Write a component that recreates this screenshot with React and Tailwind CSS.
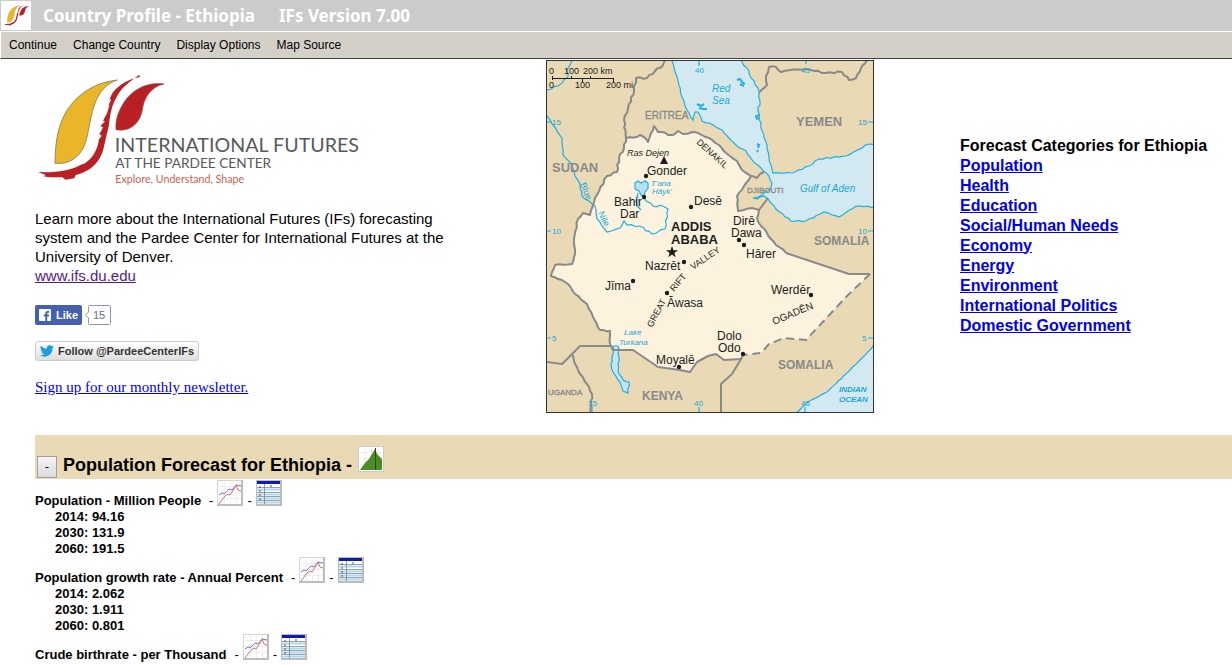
import React from "react";

const MENU = ["Continue", "Change Country", "Display Options", "Map Source"];

const CATEGORIES = [
  "Population",
  "Health",
  "Education",
  "Social/Human Needs",
  "Economy",
  "Energy",
  "Environment",
  "International Politics",
  "Domestic Government",
];

const INDICATORS = [
  { name: "Population - Million People", values: [["2014", "94.16"], ["2030", "131.9"], ["2060", "191.5"]] },
  { name: "Population growth rate - Annual Percent", values: [["2014", "2.062"], ["2030", "1.911"], ["2060", "0.801"]] },
  { name: "Crude birthrate - per Thousand", values: [] },
];

// Breaks straight segments into short, slightly irregular ones, like surveyed borders.
function rough(points, amount = 0.8, step = 4) {
  const out = [points[0]];
  let n = 0;
  for (let i = 1; i < points.length; i++) {
    const [x0, y0] = points[i - 1];
    const [x1, y1] = points[i];
    const len = Math.hypot(x1 - x0, y1 - y0) || 1;
    const parts = Math.max(1, Math.round(len / step));
    for (let k = 1; k < parts; k++) {
      n++;
      const o = Math.sin(n * 2.7 + i) * amount;
      out.push([x0 + ((x1 - x0) * k) / parts - ((y1 - y0) / len) * o, y0 + ((y1 - y0) * k) / parts + ((x1 - x0) / len) * o]);
    }
    out.push([x1, y1]);
  }
  return out.map(([x, y]) => x.toFixed(1) + "," + y.toFixed(1)).join(" ");
}

const NORTH = [[626,138],[637,137],[640,135],[644,137],[648,142],[654,126],[658,132],[662,132],[668,135],[673,135],[678,131],[683,134],[692,132],[700,134],[709,138],[719,145],[726,153],[737,161],[742,170],[751,176]];
const DJIBOUTI = [[751,176],[744,186],[737,196],[738,211],[752,208],[759,210]];
const EAST = [[759,210],[757,218],[761,226],[767,233],[771,239],[776,245],[779,247],[786,253]];
const OGADEN = [[786,253],[849,274],[870,274]];
const DASHED = [[870,274],[847,296],[806,340],[784,338],[769,344],[761,353],[743,355]];
const SOUTH = [[743,355],[741,359],[724,360],[716,354],[708,356],[697,362],[690,372],[680,370],[658,367],[633,350],[613,350],[610,344]];
const WEST = [[610,344],[610,331],[600,330],[593,317],[587,304],[575,294],[568,284],[562,280],[551,276],[555,265],[572,264],[575,254],[574,239],[578,219],[583,213],[590,215],[595,198],[607,176],[617,172],[619,158],[624,148],[626,138]];
const RED_SEA_WEST = [[672,61],[678,81],[682,97],[687,110],[693,120],[695,112],[698,112],[702,121],[709,123],[716,127],[722,130],[729,138],[737,146],[746,151],[752,160],[761,168],[769,176],[772,183],[769,190],[758,197],[754,198],[757,199],[764,196],[768,199],[776,209],[791,221],[806,221],[824,212],[839,217],[856,206],[875,207]];
const YEMEN_COAST = [[875,144],[869,144],[846,156],[819,159],[809,166],[792,173],[773,173],[769,158],[767,145],[762,131],[758,111],[760,101],[758,88],[751,78],[749,71],[739,59]];
const OCEAN = [[875,342],[871,349],[850,370],[827,392],[808,402],[796,413]];
const BLUE_NILE = [[547,116],[553,125],[562,138],[563,155],[572,165],[575,176],[580,184],[582,196],[595,206],[597,219],[607,232],[620,228],[624,221],[627,225],[640,226],[652,234],[665,229],[668,209],[663,206],[653,206],[644,198]];
const BORDERS = [
  [[665,60],[663,65],[655,71],[647,78],[636,78],[634,91],[628,108],[624,120],[626,138]],
  [[759,93],[767,85],[766,76],[769,67],[776,67],[781,72],[790,70],[806,69],[826,73],[842,72],[849,80],[856,78],[861,68],[867,60]],
  [[751,176],[757,178],[760,174],[764,172]],
  [[572,354],[575,364],[580,374],[587,384],[592,394],[590,413]],
];
const DOTS = [[646,176],[644,197],[691,207],[739,240],[744,245],[684,262],[633,281],[667,293],[811,295],[743,354],[679,367]];

function EthiopiaMap() {
  const land = [...NORTH, ...DJIBOUTI, ...EAST, ...OGADEN, ...DASHED, ...SOUTH, ...WEST];
  return (
    <svg viewBox="546 60 328 353" className="h-[353px] w-[328px] shrink-0" role="img" aria-label="Map of Ethiopia" fontFamily="'Liberation Sans', Arial, sans-serif">
      <rect x="546" y="60" width="328" height="353" fill="#e9d9b4" />
      <polygon points={rough([...RED_SEA_WEST, ...YEMEN_COAST], 0.5)} fill="#d2e9f1" />
      <polygon points={rough([...OCEAN, [875, 413]], 0.3)} fill="#d2e9f1" />
      <polygon points={land.join(" ")} fill="#fcf2de" />
      <g fill="none" stroke="#1fb0e4" strokeWidth="1.2">
        <polyline points={rough(RED_SEA_WEST, 0.6)} />
        <polyline points={rough(YEMEN_COAST, 0.7)} />
        <polyline points={rough(OCEAN, 0.3)} />
        <polyline points={rough(BLUE_NILE, 0.8)} />
        <polyline points={rough([[572,60],[567,71],[568,77],[558,86],[547,90]], 0.8)} />
        <path d="M699 61v5M806 61v3M546 122h6M546 231h5M546 338h5M868 122h6M868 231h6M868 338h6M592 406v6M699 407v5M805 407v5" />
        <path d="M635 183l3-2 3 2 4-2 3 2 0 5-3 4-1 5-3-2-2-4-4-2zM638 193l-2 8 1 5 4 4" fill="#b9e0ef" />
        <polygon points={rough([[613,346],[618,346],[619,357],[618,371],[623,380],[629,382],[628,393],[623,391],[620,382],[613,372],[611,364],[613,354],[613,346]], 0.6)} fill="#c5e6f1" />
        <path d="M737 80l3-1 2 3 3 2M740 84l4 2M697 104l4 2 3-2M699 108l4 1 4 0M755 117l4-2M756 119l3-1M757 144l2 1-1 3M757 150l1 2" strokeWidth="2" />
      </g>
      <g fill="none" stroke="#88898b" strokeWidth="2" strokeLinejoin="round">
        {[NORTH, DJIBOUTI, EAST, WEST, ...BORDERS].map((line, i) => (
          <polyline key={i} points={rough(line)} />
        ))}
        <polyline points={OGADEN.join(" ")} />
        <polyline points={SOUTH.join(" ")} />
        <polyline points={DASHED.join(" ")} strokeDasharray="8 5" />
        <path d="M759 210l9-12M610 346H580L562 364 547 362M741 359l-9 15-11 10v29" />
      </g>
      <path d="M552.5 76v4M552 78.5h61M571.5 76v3M582.500 79v3M590.500 76v3M613.500 78v4" stroke="#222" fill="none" />
      <g fontSize="9" fill="#222">
        <text x="549" y="74">0</text><text x="564" y="74">100</text><text x="583" y="74">200 km</text>
        <text x="549" y="88">0</text><text x="575" y="88">100</text><text x="606" y="88">200 mi</text>
      </g>
      <g fontWeight="bold" fill="#88898b">
        <text x="552" y="172" fontSize="13">SUDAN</text>
        <text x="645" y="119" fontSize="10" fontWeight="normal" stroke="#88898b" strokeWidth=".3">ERITREA</text>
        <text x="796" y="126" fontSize="13">YEMEN</text>
        <text x="814" y="245" fontSize="12">SOMALIA</text>
        <text x="778" y="369" fontSize="12">SOMALIA</text>
        <text x="642" y="400" fontSize="12">KENYA</text>
        <text x="548" y="395" fontSize="8" fontWeight="normal" stroke="#88898b" strokeWidth=".3">UGANDA</text>
        <text x="747" y="193" fontSize="8" fontWeight="normal" stroke="#88898b" strokeWidth=".3">DJIBOUTI</text>
      </g>
      <g fill="#1aa7dc" fontSize="8">
        <text x="695" y="73">40</text><text x="801" y="73">45</text><text x="552" y="125">15</text><text x="858" y="125">15</text>
        <text x="552" y="234">10</text><text x="858" y="234">10</text><text x="552" y="341">5</text><text x="862" y="341">5</text>
        <text x="588" y="406">35</text><text x="694" y="406">40</text><text x="801" y="406">45</text>
        <g fontStyle="italic">
          <text x="712" y="92" fontSize="10">Red</text><text x="712" y="104" fontSize="10">Sea</text>
          <text x="800" y="192" fontSize="10">Gulf of Aden</text>
          <text x="651" y="186">T'ana</text><text x="652" y="194">Hāyk'</text>
          <text x="624" y="335">Lake</text><text x="619" y="345">Turkana</text>
          <text x="839" y="392" fontWeight="bold">INDIAN</text><text x="839" y="402" fontWeight="bold">OCEAN</text>
        </g>
        <text transform="translate(580 184) rotate(68)" fontSize="9">Blue</text>
        <text transform="translate(598 213) rotate(65)" fontSize="9">Nile</text>
      </g>
      <g fill="#1d1d1b" fontSize="12">
        <text x="647" y="175">Gonder</text><text x="614" y="206">Bahir</text><text x="620" y="218">Dar</text>
        <text x="694" y="205">Desē</text><text x="733" y="225">Dirē</text><text x="731" y="237">Dawa</text>
        <text x="746" y="258">Hārer</text><text x="645" y="270">Nazrēt</text><text x="605" y="290">Jīma</text>
        <text x="667" y="307">Āwasa</text><text x="771" y="294">Werdēr</text><text x="717" y="340">Dolo</text>
        <text x="718" y="352">Odo</text><text x="656" y="364">Moyalē</text>
        <text x="671" y="231" fontSize="13" fontWeight="bold">ADDIS</text>
        <text x="671" y="244" fontSize="13" fontWeight="bold">ABABA</text>
        <text x="627" y="156" fontSize="9" fontStyle="italic">Ras Dejen</text>
        <g fontSize="9">
          <text transform="translate(696 143) rotate(42)">DENAKIL</text>
          <text transform="translate(652 328) rotate(-62)">GREAT</text>
          <text transform="translate(674 292) rotate(-50)">RIFT</text>
          <text transform="translate(693 270) rotate(-34)">VALLEY</text>
          <text transform="translate(774 325) rotate(-23)" fontSize="10">OGADĒN</text>
        </g>
        <path d="M664 156l4 8h-8zM672 246l1.500 4.200h4.500l-3.600 2.700 1.300 4.300-3.700-2.600-3.700 2.600 1.300-4.300-3.600-2.700h4.500z" />
        {DOTS.map(([x, y]) => (
          <circle key={x} cx={x} cy={y} r="2.200" />
        ))}
      </g>
      <rect x="546.5" y="60.5" width="327" height="352" fill="none" stroke="#333" />
    </svg>
  );
}

function LogoMark() {
  return (
    <>
      <path d="M262 45C200 52 150 80 115 130 85 175 76 225 75 295c34 3 66-10 84-45 18-34 16-77 34-130 14-40 36-64 69-75z" fill="#eab528" stroke="#9c8c55" strokeWidth="3" />
      <path d="M330 36C295 42 262 62 246 86l-8 18 6-2-9 20 4-3-8 26-12 22 6 2-14 14 8 4-8 16-4 2 8 8-8 10c-4 30-18 56-42 72l-12 4c-36 20-78 24-128 22l22 9-6 4c22 6 38 1 56 3l10 7 26-4 4-10c44-10 78-40 86-90l14-60c4-36 8-58 24-86 14-26 36-44 67-64z" fill="#b92025" />
      <path d="M402 57C350 50 305 75 280 115 262 145 256 170 258 194 300 202 330 175 337 135 342 95 365 65 402 57z" fill="#b92025" stroke="#8c4d4d" strokeWidth="2" />
    </>
  );
}

function Logo() {
  return (
    <svg viewBox="15 0 1020 390" className="h-[130px] w-[340px]" role="img" aria-label="International Futures at the Pardee Center" fontFamily="Lato, sans-serif">
      <LogoMark />
      <text x="254" y="260" fontSize="59" fill="#58595b">INTERNATIONAL FUTURES</text>
      <text x="256" y="308" fontSize="41" fill="#58595b">AT THE PARDEE CENTER</text>
      <text x="256" y="354" fontSize="32" fill="#c9604f">Explore, Understand, Shape</text>
    </svg>
  );
}

function ChartIcon() {
  return (
    <svg viewBox="0 0 26 26" className="size-[26px]" aria-hidden="true">
      <rect x=".5" y=".5" width="25" height="25" fill="#fdfdfd" stroke="#d4d4d4" />
      <path d="M0 25h26M25 0v26" stroke="#bdbdbd" strokeWidth="2" fill="none" />
      <path d="M2 6.500h22M2 12.500h22M2 18.500h22M7.500 2v22M13.500 2v22M19.500 2v22" stroke="#eee" fill="none" />
      <path d="M2 15l3-2 2 1 5-5 3 1 4-5 5 1" stroke="#7078d0" fill="none" />
      <path d="M2 24l6-8 3-2 2 1 4-6 2-4 2 5 3 1" stroke="#cf776c" fill="none" />
    </svg>
  );
}

function TableIcon() {
  return (
    <svg viewBox="0 0 26 26" className="size-[26px]" aria-hidden="true">
      <rect width="26" height="26" fill="#bcbcbc" />
      <rect x="1" y="1" width="23" height="23" fill="#fff" />
      <rect x="1" y="1" width="23" height="3" fill="#0d1cb0" />
      <path d="M1 9.500h23M1 14.500h23M1 18.500h23M1 22.500h23" stroke="#add8ef" strokeWidth="2" />
      <path d="M1 7.500h23M1 12.500h23M1 16.500h23M1 20.500h23M8.500 4v20" stroke="#6d7880" strokeWidth=".7" />
      <path d="M4 6v2M4 10v2M4 14v2M4 18v2M15 5v2" stroke="#555" />
    </svg>
  );
}

function PyramidIcon() {
  return (
    <svg viewBox="0 0 26 26" className="size-[26px]" aria-hidden="true">
      <rect x=".5" y=".5" width="25" height="25" fill="#fdfdfd" stroke="#c8ccd0" />
      <path d="M2 6.500h22M2 12.500h22M7.500 2v22M13.500 2v22M19.500 2v22" stroke="#eee" fill="none" />
      <path d="M2 24l5-7 4-4 3-5 3-5 2 5 5 5v11z" fill="#4c8c22" />
      <path d="M17.500 2v22" stroke="#234b0d" />
    </svg>
  );
}

export default function App() {
  return (
    <div className="min-h-screen overflow-x-hidden bg-white font-['Liberation_Sans',Arial,sans-serif] text-black">
      <header>
        <div className="flex h-[31px] items-center bg-[#cbcbcb] pl-px font-['Noto_Sans',sans-serif] text-[17px] leading-6 font-bold text-white">
          <svg viewBox="-20 0 450 390" className="h-[29px] w-[30px] bg-white" aria-hidden="true">
            <LogoMark />
          </svg>
          <h1 className="flex gap-6 pl-3">
            <span>Country Profile - Ethiopia</span>
            <span>IFs Version 7.00</span>
          </h1>
        </div>
        <nav className="flex h-7 items-center gap-4 border-t border-b border-l border-t-white border-b-[#404040] border-l-white bg-[#d4d0c8] pl-2 text-[12px]">
          {MENU.map((item) => (
            <button key={item} type="button">{item}</button>
          ))}
        </nav>
      </header>

      <main className="pt-px pl-[35px]">
        <section className="grid grid-cols-[511fr_414fr_272fr]">
          <div className="pt-[5px]">
            <Logo />
            <p className="w-[430px] pt-[14px] text-[15px] leading-[19px]">
              Learn more about the International Futures (IFs) forecasting system and the Pardee Center for International Futures at the University of Denver.
              <br />
              <a href="#ifs" className="text-[#551a8b] underline">www.ifs.du.edu</a>
            </p>
            <div className="flex items-center pt-5">
              <button type="button" className="flex h-5 items-center gap-[5px] rounded-xs bg-[#4460ae] px-1 text-[11px] font-bold text-white">
                <svg viewBox="0 0 12 12" className="size-3" aria-hidden="true">
                  <rect width="12" height="12" rx="1" fill="#fff" />
                  <path d="M6.300 12V7.500H4.800V5.600h1.500V4.300C6.300 2.800 7.200 2 8.700 2h1.400v1.800H9c-.6 0-.8.300-.8.800v1h1.900l-.3 1.900H8.200V12z" fill="#4460ae" />
                </svg>
                Like
              </button>
              <svg viewBox="0 0 28 20" className="ml-[2px] h-5 w-7" fontFamily="'Liberation Sans', sans-serif">
                <path d="M5.500.5h20a1 1 0 0 1 1 1v17a1 1 0 0 1-1 1h-20a1 1 0 0 1-1-1V13L1.500 10l3-3V1.500a1 1 0 0 1 1-1z" fill="#fff" stroke="#9096a8" />
                <text x="9" y="14" fontSize="11" fill="#6a7180">15</text>
              </svg>
            </div>
            <div className="pt-4">
              <button type="button" className="flex h-5 items-center gap-1 rounded-[3px] border border-[#ccc] bg-linear-to-b from-white to-[#dedede] px-1 text-[11px] font-bold text-[#333]">
                <svg viewBox="0 0 24 20" className="h-3 w-[14px]" aria-hidden="true">
                  <path d="M24 2.400a10 10 0 0 1-2.800.8A5 5 0 0 0 23.300.5a10 10 0 0 1-3.100 1.200 4.900 4.900 0 0 0-8.400 4.500A14 14 0 0 1 1.700 1a4.900 4.900 0 0 0 1.500 6.600A5 5 0 0 1 1 7a4.900 4.900 0 0 0 3.900 4.800 5 5 0 0 1-2.200.1 4.900 4.900 0 0 0 4.600 3.400A9.900 9.900 0 0 1 0 17.400 14 14 0 0 0 21.500 5 10 10 0 0 0 24 2.400z" fill="#1b9fe0" />
                </svg>
                Follow @PardeeCenterIFs
              </button>
            </div>
            <a href="#newsletter" className="mt-4 inline-block font-['Liberation_Serif',serif] text-[15px] leading-5 text-[#0000ee] underline">
              Sign up for our monthly newsletter.
            </a>
          </div>

          <EthiopiaMap />

          <div className="self-center pb-[2px] text-[16px] leading-5 font-bold">
            <h2 className="whitespace-nowrap">Forecast Categories for Ethiopia</h2>
            <ul>
              {CATEGORIES.map((name) => (
                <li key={name}>
                  <a href="#category" className="text-[#0000ee] underline">{name}</a>
                </li>
              ))}
            </ul>
          </div>
        </section>

        <section className="pt-[22px]">
          <div className="mb-px flex h-11 items-end bg-[#e9d9b4] pb-px pl-[2px]">
            <button type="button" aria-label="Collapse section" className="h-[22px] w-5 border border-[#a0a0a0] bg-linear-to-b from-[#f4f4f4] to-[#dcdcdc] text-[13px] leading-5">-</button>
            <h2 className="pr-[6px] pb-[3px] pl-[6px] text-[18px] leading-5 font-bold">Population Forecast for Ethiopia -</h2>
            <a href="#pyramid" aria-label="Population pyramid" className="pb-[6px]"><PyramidIcon /></a>
          </div>
          {INDICATORS.map(({ name, values }) => (
            <div key={name} className="text-[13px] leading-4 font-bold">
              <div className="flex h-[29px] items-end gap-1">
                <h3 className="pr-1">{name}</h3>
                <span className="font-normal">-</span>
                <a href="#chart" aria-label={name + " chart"} className="pb-[3px]"><ChartIcon /></a>
                <span className="font-normal">-</span>
                <a href="#table" aria-label={name + " table"} className="pb-[3px]"><TableIcon /></a>
              </div>
              <ul className="pl-5">
                {values.map(([year, value]) => (
                  <li key={year}>{year}: {value}</li>
                ))}
              </ul>
            </div>
          ))}
        </section>
      </main>
    </div>
  );
}
